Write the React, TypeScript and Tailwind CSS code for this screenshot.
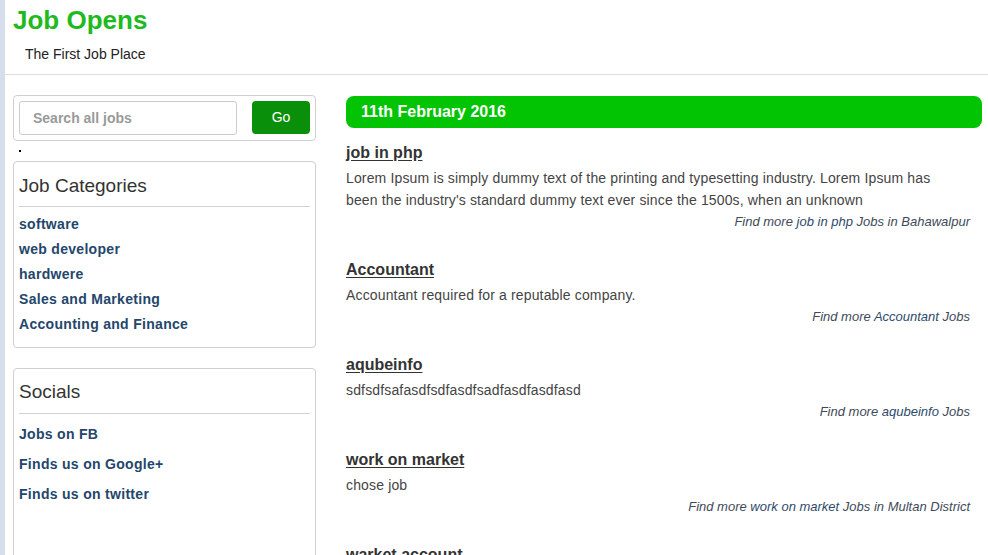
const categories = [
  "software",
  "web developer",
  "hardwere",
  "Sales and Marketing",
  "Accounting and Finance",
];

const socials = ["Jobs on FB", "Finds us on Google+", "Finds us on twitter"];

const jobs = [
  {
    title: "job in php",
    body:
      "Lorem Ipsum is simply dummy text of the printing and typesetting industry. Lorem Ipsum has been the industry's standard dummy text ever since the 1500s, when an unknown",
    place: "Bahawalpur",
  },
  {
    title: "Accountant",
    body: "Accountant required for a reputable company.",
    place: "",
  },
  {
    title: "aqubeinfo",
    body: "sdfsdfsafasdfsdfasdfsadfasdfasdfasd",
    place: "",
  },
  {
    title: "work on market",
    body: "chose job",
    place: "Multan District",
  },
  {
    title: "warket account",
    body: "account job",
    place: "",
  },
];

function SidePanel({
  title,
  items,
  rowClass,
  titleClass,
  bottomClass,
}: {
  title: string;
  items: string[];
  rowClass: string;
  titleClass: string;
  bottomClass: string;
}) {
  return (
    <div className={`border border-[#cfcfcf] rounded-[4px] px-[5px] ${bottomClass}`}>
      <h3 className={`text-[19px] leading-[20px] text-[#333] ${titleClass}`}>{title}</h3>
      <div className="h-px bg-[#d2d2d2]" />
      <ul className="pt-[5px]">
        {items.map((item) => (
          <li key={item} className={`flex items-center ${rowClass}`}>
            <a className="text-[14px] font-bold tracking-[0.3px] text-[#24466b] cursor-pointer">
              {item}
            </a>
          </li>
        ))}
      </ul>
    </div>
  );
}

export default function App() {
  return (
    <div className="flex min-h-[555px] bg-white font-['Liberation_Sans',Arial,sans-serif]">
      {/* left edge strip */}
      <div className="w-[5px] shrink-0 bg-[#d6ddec]" />

      <div className="flex-1 min-w-0">
        {/* Header */}
        <header className="h-[75px] border-b border-[#dedede] pl-[8px]">
          <h1 className="pt-[5px] text-[26px] leading-[30px] font-bold text-[#1fba1f]">
            Job Opens
          </h1>
          <p className="pl-[12px] pt-[11px] text-[14px] leading-[16px] text-[#222]">
            The First Job Place
          </p>
        </header>

        <div className="flex pl-[8px] pr-[6px] pt-[20px]">
          {/* Sidebar */}
          <aside className="w-[303px] shrink-0">
            <form className="flex items-start gap-[15px] border border-[#cfcfcf] rounded-[4px] p-[5px]">
              <input
                placeholder="Search all jobs"
                className="w-[218px] h-[34px] border border-[#cccccc] rounded-[3px] px-[13px] text-[14px] font-bold text-[#555] placeholder:text-[#9a9a9a] outline-none"
              />
              <button
                type="button"
                className="w-[58px] h-[33px] rounded-[4px] bg-[#0a8f0a] text-white text-[14px]"
              >
                Go
              </button>
            </form>

            <div className="h-[20px] relative">
              <span className="absolute left-[6px] top-[9px] w-[2px] h-[2px] bg-black" />
            </div>

            <SidePanel
              title="Job Categories"
              items={categories}
              rowClass="h-[25px]"
              titleClass="pt-[14px] pb-[10px]"
              bottomClass="pb-[10px]"
            />

            <div className="h-[20px]" />

            <SidePanel
              title="Socials"
              items={socials}
              rowClass="h-[30px]"
              titleClass="pt-[13px] pb-[11px]"
              bottomClass="pb-[80px]"
            />
          </aside>

          {/* Main column */}
          <main className="flex-1 min-w-0 ml-[30px]">
            <div className="h-[32px] mt-px rounded-[8px] bg-[#03c403] flex items-center px-[15px]">
              <h2 className="text-[16px] font-bold text-white">11th February 2016</h2>
            </div>

            <div className="pt-[13px]">
              {jobs.map((job) => (
                <div key={job.title} className="mb-[25px]">
                  <a className="block text-[16px] leading-[24px] font-bold text-[#333] underline underline-offset-[2px] cursor-pointer">
                    {job.title}
                  </a>
                  <p className="mt-[2px] max-w-[600px] text-[14px] leading-[22px] tracking-[0.15px] text-[#444]">
                    {job.body}
                  </p>
                  <p className="pr-[12px] text-right text-[13px] leading-[22px] italic text-[#3e4a59]">
                    Find more <a className="text-[#2e4a6a]">{job.title}</a> Jobs
                    {job.place ? ` in ${job.place}` : ""}
                  </p>
                </div>
              ))}
            </div>
          </main>
        </div>
      </div>
    </div>
  );
}
